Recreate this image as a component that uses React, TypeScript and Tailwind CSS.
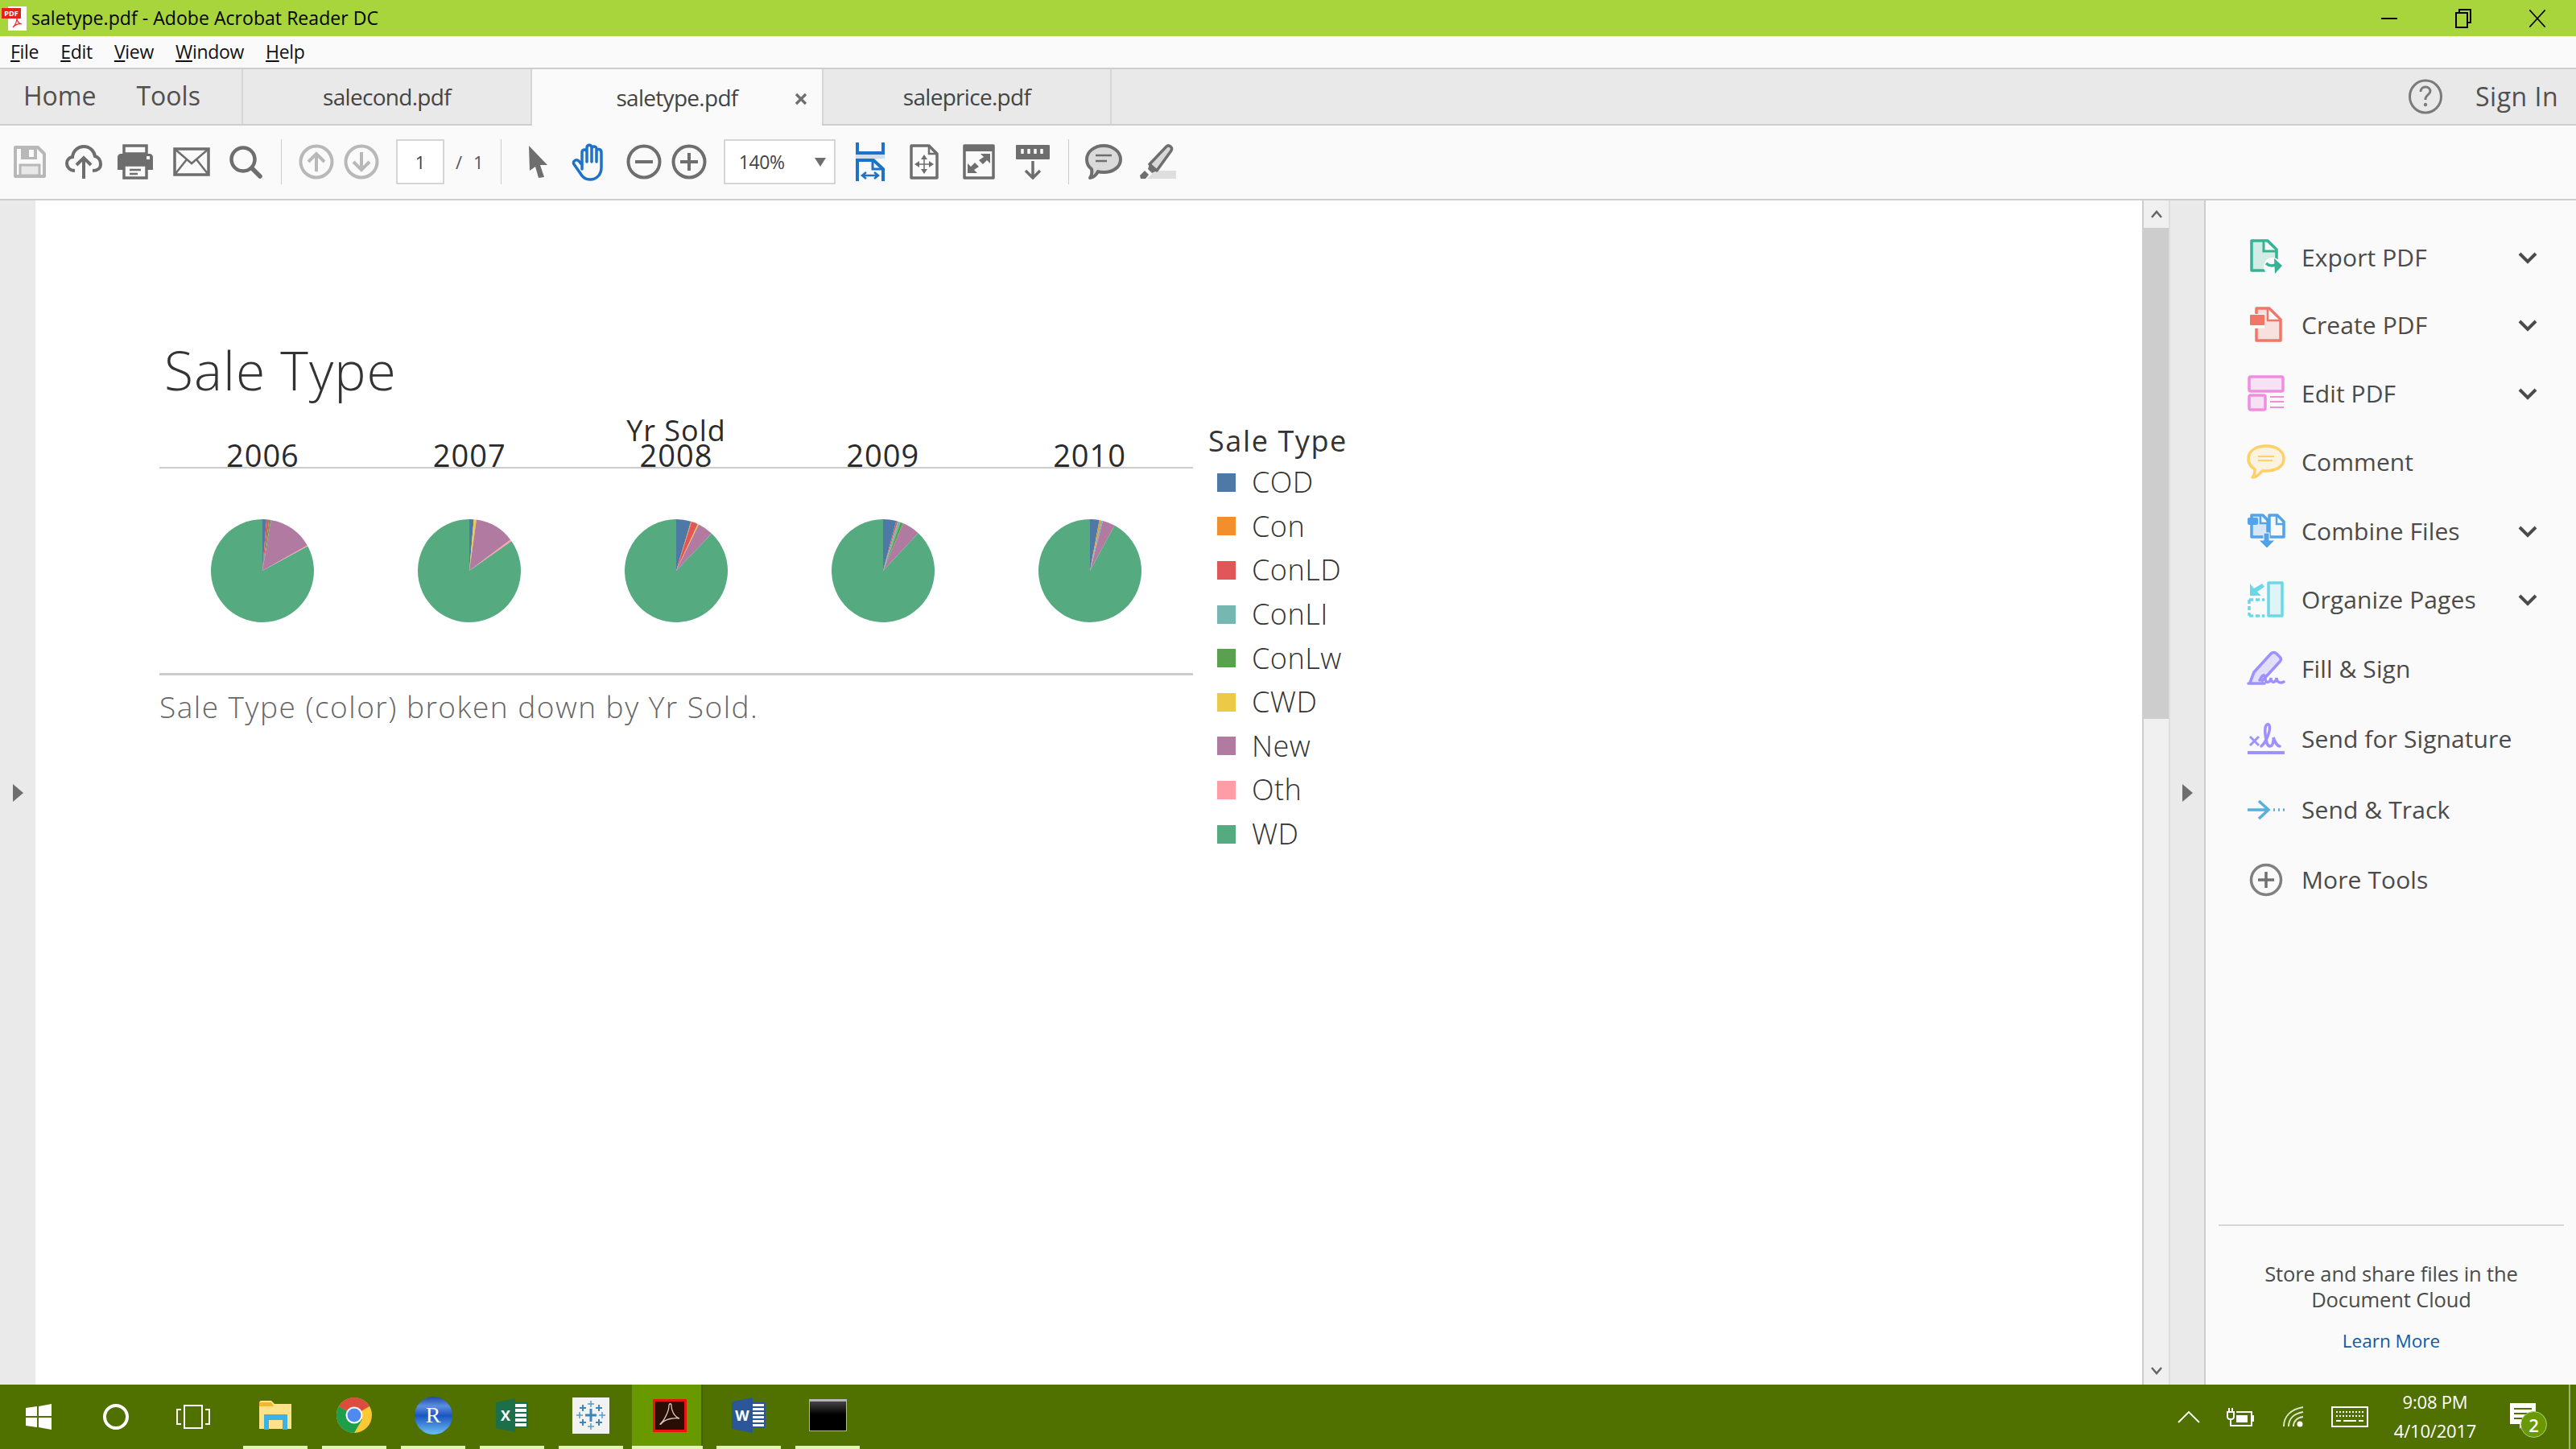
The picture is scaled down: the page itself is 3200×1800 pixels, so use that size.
import React from "react";

const slices: Record<string, string> = {
  COD: "#4e79a7",
  Con: "#f28e2b",
  ConLD: "#e15759",
  ConLI: "#76b7b2",
  ConLw: "#59a14f",
  CWD: "#edc948",
  New: "#b07aa1",
  Oth: "#ff9da7",
  WD: "#56aa80",
};

// each wedge is [sale type, end angle in degrees, clockwise from 12 o'clock]
const years: { year: string; wedges: [string, number][] }[] = [
  { year: "2006", wedges: [["COD", 4.5], ["ConLD", 7.5], ["ConLw", 9.5], ["New", 60.6], ["Oth", 61.6], ["WD", 360]] },
  { year: "2007", wedges: [["COD", 5], ["CWD", 8], ["New", 53], ["Oth", 55], ["WD", 360]] },
  { year: "2008", wedges: [["COD", 16.6], ["Con", 17.5], ["ConLD", 24.8], ["CWD", 26], ["New", 43.6], ["WD", 360]] },
  { year: "2009", wedges: [["COD", 14.8], ["ConLD", 16.5], ["ConLI", 19.6], ["ConLw", 23], ["New", 43], ["WD", 360]] },
  { year: "2010", wedges: [["COD", 10.5], ["Con", 12.4], ["ConLI", 14.5], ["New", 28.6], ["WD", 360]] },
];

function Pie({ wedges }: { wedges: [string, number][] }) {
  const point = (deg: number) => {
    const a = (deg * Math.PI) / 180;
    return `${64 + 64 * Math.sin(a)} ${64 - 64 * Math.cos(a)}`;
  };
  let from = 0;
  return (
    <svg width="128" height="128" viewBox="0 0 128 128">
      {wedges.map(([name, to]) => {
        const d = `M64 64 L${point(from)} A64 64 0 ${to - from > 180 ? 1 : 0} 1 ${point(to)} Z`;
        from = to;
        return <path key={name} d={d} fill={slices[name]} />;
      })}
    </svg>
  );
}

const gray = "#6e6e6e";
const light = "#b8b8b8";
const blue = "#1e73c8";

const SaveIcon = () => (
  <svg width="42" height="42" viewBox="0 0 42 42">
    <path d="M3 3H31L39 11V39H3Z" fill="none" stroke={light} strokeWidth="4" strokeLinejoin="round" />
    <path d="M10 3H30V18H10Z" fill={light} />
    <path d="M20 6H26V15H20Z" fill="#fafafa" />
    <path d="M9 25H33V38H9Z" fill="#e8e8e8" stroke={light} strokeWidth="3" />
  </svg>
);
const UploadIcon = () => (
  <svg width="46" height="44" viewBox="0 0 46 44">
    <path d="M12 33C5 33 2 28 2 24C2 19 6 16 9 16C10 8 16 3 23 3C31 3 36 9 37 15C41 16 44 20 44 25C44 30 40 33 34 33" fill="none" stroke={gray} strokeWidth="4" />
    <path d="M23 43V18M14 26L23 17L32 26" fill="none" stroke={gray} strokeWidth="4" />
  </svg>
);
const PrintIcon = () => (
  <svg width="46" height="44" viewBox="0 0 46 44">
    <path d="M9 2H37V12H9Z" fill="none" stroke={gray} strokeWidth="3.5" />
    <path d="M5 12H41C43 12 45 14 45 16V32H37V26H9V32H1V16C1 14 3 12 5 12Z" fill={gray} />
    <path d="M9 26H37V42H9Z" fill="#fafafa" stroke={gray} strokeWidth="3.5" />
    <path d="M16 32H30M16 37H26" stroke={gray} strokeWidth="2.5" />
    <rect x="37" y="15" width="4" height="4" fill="#fafafa" />
  </svg>
);
const MailIcon = () => (
  <svg width="46" height="36" viewBox="0 0 46 36">
    <path d="M2 2H44V34H2Z" fill="none" stroke={gray} strokeWidth="3.5" />
    <path d="M2 2L23 20L44 2M2 34L17 15M44 34L29 15" fill="none" stroke={gray} strokeWidth="2.5" />
  </svg>
);
const SearchIcon = () => (
  <svg width="42" height="42" viewBox="0 0 42 42">
    <circle cx="18" cy="18" r="14.5" fill="none" stroke={gray} strokeWidth="4.5" />
    <path d="M29 29L39 39" stroke={gray} strokeWidth="5.5" strokeLinecap="round" />
  </svg>
);
const RoundArrow = ({ down }: { down?: boolean }) => (
  <svg width="44" height="44" viewBox="0 0 44 44">
    <circle cx="22" cy="22" r="19.5" fill="none" stroke={light} strokeWidth="4" />
    <path d={down ? "M22 10V32M12 22L22 32L32 22" : "M22 34V12M12 22L22 12L32 22"} fill="none" stroke={light} strokeWidth="4" />
  </svg>
);
const CursorIcon = () => (
  <svg width="28" height="42" viewBox="0 0 28 42">
    <path d="M2 1L25 25L16 25L21 40L14 41L10 27L3 32Z" fill={gray} />
  </svg>
);
const HandIcon = () => (
  <svg width="46" height="48" viewBox="0 0 46 48">
    <path
      d="M13 33V12C13 8 19 8 19 12V7C19 2 25 2 25 7V8C25 4 31 4 31 8V11C31 7 37 8 37 12V31C37 40 31 46 23 46C16 46 13 42 10 37L3 27C1 23 6 20 9 23L13 28M19 12V24M25 8V24M31 11V24"
      fill="none"
      stroke={blue}
      strokeWidth="3.5"
      strokeLinecap="round"
      strokeLinejoin="round"
    />
  </svg>
);
const ZoomCircle = ({ plus }: { plus?: boolean }) => (
  <svg width="44" height="44" viewBox="0 0 44 44">
    <circle cx="22" cy="22" r="19.5" fill="none" stroke={gray} strokeWidth="4" />
    <path d={plus ? "M11 22H33M22 11V33" : "M11 22H33"} stroke={gray} strokeWidth="4" />
  </svg>
);
const FitWidthIcon = () => (
  <svg width="36" height="48" viewBox="0 0 36 48">
    <path d="M2 0V13H34V0" fill="none" stroke={blue} strokeWidth="4" />
    <path d="M0 15H36V20H0Z" fill="#cfdff2" />
    <path d="M2 48V22H22L34 33V48" fill="none" stroke={blue} strokeWidth="4" />
    <path d="M21 22V33H34" fill="none" stroke={blue} strokeWidth="3" />
    <path d="M9 41H27M13 37L8 41L13 45M23 37L28 41L23 45" fill="none" stroke={blue} strokeWidth="2.5" />
  </svg>
);
const FitPageIcon = () => (
  <svg width="36" height="44" viewBox="0 0 36 44">
    <path d="M2 2H24L34 12V42H2Z" fill="none" stroke={gray} strokeWidth="3.5" strokeLinejoin="round" />
    <path d="M24 2V12H34" fill="none" stroke={gray} strokeWidth="2.5" />
    <path d="M18 13L14 19H22ZM18 37L14 31H22ZM6 25L12 21V29ZM30 25L24 21V29Z" fill={gray} />
    <path d="M18 18V32M11 25H25" stroke={gray} strokeWidth="1.5" />
  </svg>
);
const FullScreenIcon = () => (
  <svg width="40" height="44" viewBox="0 0 40 44">
    <path d="M2 2H38V42H2Z" fill="none" stroke={gray} strokeWidth="3.5" strokeLinejoin="round" />
    <path d="M2 2H38V9H2Z" fill={gray} />
    <path d="M22 12H34V24L30 20L25 25L20 20L26 16ZM18 36H6V24L10 28L15 23L20 28L14 32Z" fill={gray} />
  </svg>
);
const ReadIcon = () => (
  <svg width="44" height="44" viewBox="0 0 44 44">
    <path d="M2 2H42V18H2Z" fill={gray} stroke={gray} strokeWidth="2" strokeLinejoin="round" />
    <path d="M9 6V12M17 6V12M25 6V12M33 6V12" stroke="#fafafa" strokeWidth="3.5" />
    <path d="M22 21V42M13 33L22 42L31 33" fill="none" stroke={gray} strokeWidth="3.5" />
  </svg>
);
const CommentIcon = () => (
  <svg width="46" height="46" viewBox="0 0 46 46">
    <path
      d="M23 3C34 3 44 10 44 20C44 30 34 36 23 36C20 36 18 36 16 35C14 39 10 43 6 43C8 40 9 37 8 32C4 29 2 25 2 20C2 10 12 3 23 3Z"
      fill="#dadada"
      stroke={gray}
      strokeWidth="4"
      strokeLinejoin="round"
    />
    <path d="M13 15H33M13 22H27" stroke={gray} strokeWidth="2.5" />
  </svg>
);
const HighlightIcon = () => (
  <svg width="46" height="44" viewBox="0 0 46 44">
    <path d="M10 43H46V33H20Z" fill="#dedede" />
    <path d="M13 25L34 3C37 0 42 4 40 8L22 33Z" fill="#d8d8d8" stroke={gray} strokeWidth="3.5" strokeLinejoin="round" />
    <path d="M13 25L22 33L16 36L11 31Z" fill={gray} />
    <path d="M2 43L1 39L7 33L12 38L8 43Z" fill={gray} />
  </svg>
);

const ExportIcon = () => (
  <svg width="48" height="48" viewBox="0 0 48 48">
    <path d="M6 3H26L37 14V40H6Z" fill="#d3ece5" stroke="#36b294" strokeWidth="3.5" strokeLinejoin="round" />
    <path d="M21 3V16H37" fill="#fafafa" stroke="#36b294" strokeWidth="3" />
    <circle cx="32" cy="35" r="11" fill="#fafafa" />
    <path d="M24 31C28 35 32 34 36 33" fill="none" stroke="#36b294" strokeWidth="3.5" />
    <path d="M34 25L44 34L35 44Z" fill="#36b294" />
  </svg>
);
const CreateIcon = () => (
  <svg width="48" height="48" viewBox="0 0 48 48">
    <path d="M12 3H28L42 17V43H12Z" fill="#f8e0de" stroke="#f07668" strokeWidth="3.5" strokeLinejoin="round" />
    <path d="M26 4V18H41" fill="#fafafa" stroke="#f07668" strokeWidth="2.5" />
    <path d="M3 10H22V28H3Z" fill="#fafafa" />
    <rect x="4" y="11" width="18" height="13" rx="1" fill="#f07668" />
  </svg>
);
const EditIcon = () => (
  <svg width="48" height="48" viewBox="0 0 48 48">
    <rect x="3" y="3" width="42" height="18" rx="2" fill="#f7e2f5" stroke="#ef8ddf" strokeWidth="3.5" />
    <rect x="3" y="26" width="20" height="18" rx="2" fill="#f7e2f5" stroke="#ef8ddf" strokeWidth="3.5" />
    <path d="M29 28H46M29 34H46M29 41H46" stroke="#ef8ddf" strokeWidth="2" />
  </svg>
);
const CommentToolIcon = () => (
  <svg width="48" height="48" viewBox="0 0 48 48">
    <path
      d="M24 4C35 4 46 9 46 20C46 31 34 35 24 35C22 35 20 35 19 35C16 39 12 43 7 43C9 41 10 38 10 33C5 30 2 26 2 20C2 9 13 4 24 4Z"
      fill="#fbf2df"
      stroke="#fdd068"
      strokeWidth="3.5"
      strokeLinejoin="round"
    />
    <path d="M14 17H34M14 22H32" stroke="#fdd068" strokeWidth="2" />
  </svg>
);
const CombineIcon = () => (
  <svg width="48" height="48" viewBox="0 0 48 48">
    <path d="M6 4H20L26 10V31H6Z" fill="#d5e7f7" stroke="#52a3ec" strokeWidth="3.5" strokeLinejoin="round" />
    <path d="M17 4V14H26" fill="#fafafa" stroke="#52a3ec" strokeWidth="2.5" />
    <rect x="1" y="7" width="13" height="9" rx="2" fill="#52a3ec" />
    <path d="M28 4H38L46 12V31H28Z" fill="#fafafa" stroke="#52a3ec" strokeWidth="3.5" strokeLinejoin="round" />
    <path d="M37 4V15H46" fill="none" stroke="#52a3ec" strokeWidth="2.5" />
    <path d="M21 26H28V35H35L25 45L15 35H21Z" fill="#52a3ec" stroke="#fafafa" strokeWidth="1" />
  </svg>
);
const OrganizeIcon = () => (
  <svg width="48" height="48" viewBox="0 0 48 48">
    <path d="M27 3H44V44H27Z" fill="#def4f7" stroke="#6dd7e8" strokeWidth="3.5" strokeLinejoin="round" />
    <path d="M4 4V19H18L13 14L22 8L19 4L9 10L4 4Z" fill="#6dd7e8" />
    <path d="M3 24H22M3 44H22M3 24V44" fill="none" stroke="#6dd7e8" strokeWidth="3.5" strokeDasharray="5 3" />
  </svg>
);
const FillSignIcon = () => (
  <svg width="48" height="48" viewBox="0 0 48 48">
    <path d="M4 41L9 28L30 5C32 3 35 3 37 5L41 9C43 11 43 13 41 15L18 40" fill="#e2dffb" stroke="#9c91ff" strokeWidth="3.5" strokeLinejoin="round" />
    <path d="M2 42H22M16 38C20 30 23 30 23 36C23 42 29 42 30 35C30 42 36 42 37 35C37 41 42 42 46 40" fill="none" stroke="#9c91ff" strokeWidth="3.5" strokeLinecap="round" />
  </svg>
);
const SendSigIcon = () => (
  <svg width="48" height="48" viewBox="0 0 48 48">
    <path d="M4 21L15 32M15 21L4 32" stroke="#9c91ff" strokeWidth="3" />
    <path d="M18 33C24 28 30 14 28 7C25 3 22 8 23 18C24 27 25 33 29 33C32 33 34 26 33 22C35 27 37 33 41 33" fill="none" stroke="#9c91ff" strokeWidth="3.5" strokeLinecap="round" />
    <path d="M1 41H47" stroke="#9c91ff" strokeWidth="4" />
  </svg>
);
const TrackIcon = () => (
  <svg width="48" height="48" viewBox="0 0 48 48">
    <path d="M1 24H27M15 13L27 24L15 35" fill="none" stroke="#58aedc" strokeWidth="3.5" />
    <path d="M33 24H35M39 24H41M45 24H47" stroke="#58aedc" strokeWidth="3.5" />
  </svg>
);
const MoreIcon = () => (
  <svg width="48" height="48" viewBox="0 0 48 48">
    <circle cx="24" cy="24" r="18.5" fill="none" stroke="#808080" strokeWidth="3.5" />
    <path d="M14 24H34M24 14V34" stroke="#707070" strokeWidth="3.5" />
  </svg>
);

const tools = [
  { label: "Export PDF", icon: <ExportIcon />, more: true, h: "h-[84px]" },
  { label: "Create PDF", icon: <CreateIcon />, more: true, h: "h-[84px]" },
  { label: "Edit PDF", icon: <EditIcon />, more: true, h: "h-[85px]" },
  { label: "Comment", icon: <CommentToolIcon />, more: false, h: "h-[86px]" },
  { label: "Combine Files", icon: <CombineIcon />, more: true, h: "h-[85px]" },
  { label: "Organize Pages", icon: <OrganizeIcon />, more: true, h: "h-[85px]" },
  { label: "Fill & Sign", icon: <FillSignIcon />, more: false, h: "h-[87px]" },
  { label: "Send for Signature", icon: <SendSigIcon />, more: false, h: "h-[88px]" },
  { label: "Send & Track", icon: <TrackIcon />, more: false, h: "h-[88px]" },
  { label: "More Tools", icon: <MoreIcon />, more: false, h: "h-[86px]" },
];

const taskIcons = [
  {
    key: "explorer",
    icon: (
      <svg width="42" height="36" viewBox="0 0 42 36">
        <path d="M1 3C1 1 2 0 4 0H16L20 4H41V35H1Z" fill="#ffe28a" />
        <path d="M1 2H16L19 7H1Z" fill="#f2b72f" />
        <path d="M7 17H36V36H30V24H13V36H7Z" fill="#39b3e6" />
      </svg>
    ),
  },
  {
    key: "chrome",
    icon: (
      <svg width="44" height="44" viewBox="0 0 44 44">
        <circle cx="22" cy="22" r="22" fill="#fcc934" />
        <path d="M22 22L3 11A22 22 0 0 1 41 11Z" fill="#dc4c3f" />
        <path d="M3 11A22 22 0 0 0 22 44L32 27L22 22Z" fill="#1e9e4a" />
        <circle cx="22" cy="22" r="10.5" fill="#fff" />
        <circle cx="22" cy="22" r="8.5" fill="#4f8af0" />
      </svg>
    ),
  },
  {
    key: "r",
    icon: (
      <div className="relative flex h-[47px] w-[47px] items-center justify-center rounded-full bg-[linear-gradient(180deg,#2147a8_0%,#5a8fe0_25%,#1b55c0_50%,#6cc0f5_100%)]">
        <span className="font-['Liberation_Serif',serif] text-[28px] leading-none text-white">R</span>
      </div>
    ),
  },
  {
    key: "excel",
    icon: (
      <div className="relative flex h-[42px] w-[40px] items-center">
        <div className="absolute right-0 top-[5px] h-[32px] w-[26px] border-2 border-[#1d6f4a] bg-[repeating-linear-gradient(180deg,#ffffff_0,#ffffff_4px,#1d6f4a_4px,#1d6f4a_6px)]" />
        <div className="relative flex h-[42px] w-[24px] items-center justify-center bg-[#1d6f4a] [clip-path:polygon(0_12%,100%_0,100%_100%,0_88%)]">
          <span className="font-['Open_Sans',sans-serif] text-[18px] font-bold leading-none text-white">X</span>
        </div>
      </div>
    ),
  },
  {
    key: "tableau",
    icon: (
      <div className="flex h-[45px] w-[46px] items-center justify-center bg-[#f2f2f2]">
        <svg width="40" height="40" viewBox="0 0 40 40">
          <path d="M20 2V10M16 6H24M20 30V38M16 34H24M2 20H10M6 16V24M30 20H38M34 16V24" stroke="#5a9bc4" strokeWidth="1.5" />
          <path d="M20 12V28M13 20H27" stroke="#3d85b8" strokeWidth="3" />
          <path d="M10 7V15M6 11H14M30 7V15M26 11H34M10 25V33M6 29H14M30 25V33M26 29H34" stroke="#3d85b8" strokeWidth="2" />
        </svg>
      </div>
    ),
  },
  {
    key: "acrobat",
    icon: (
      <div className="relative flex h-[41px] w-[42px] items-center justify-center border-[3px] border-[#ee1111] bg-[#2a0d05]">
        <svg width="30" height="32" viewBox="0 0 30 32">
          <path d="M3 27C8 23 14 11 14 4C14 1 17 1 17 4C17 11 21 18 27 20C23 19 11 20 6 25C4 27 3 28 3 27Z" fill="none" stroke="#d9c8c0" strokeWidth="1.3" />
        </svg>
      </div>
    ),
  },
  {
    key: "word",
    icon: (
      <div className="relative flex h-[44px] w-[42px] items-center">
        <div className="absolute right-0 top-[6px] h-[32px] w-[26px] border-2 border-[#2b579a] bg-[repeating-linear-gradient(180deg,#ffffff_0,#ffffff_3px,#2b579a_3px,#2b579a_5px)]" />
        <div className="relative flex h-[44px] w-[26px] items-center justify-center bg-[#2b579a] [clip-path:polygon(0_12%,100%_0,100%_100%,0_88%)]">
          <span className="font-['Open_Sans',sans-serif] text-[18px] font-bold leading-none text-white">W</span>
        </div>
      </div>
    ),
  },
  {
    key: "cmd",
    icon: <div className="h-[40px] w-[47px] border-t-[3px] border-b border-x border-[#b5b5b5] bg-[linear-gradient(180deg,#444_0%,#000_45%)]" />,
  },
];

export default function App() {
  return (
    <div className="flex h-[1800px] w-[3200px] flex-col overflow-hidden bg-white font-['Open_Sans',sans-serif]">
      {/* title bar */}
      <div className="flex h-[45px] items-center bg-[#a8d43c]">
        <div className="relative ml-[2px] h-[30px] w-[32px] shrink-0">
          <div className="absolute left-[8px] top-0 h-[30px] w-[23px] bg-white" />
          <svg className="absolute left-[12px] top-[13px]" width="14" height="14" viewBox="0 0 14 14">
            <path d="M2 13C5 10 7 5 7 1C7 5 9 8 13 9C9 8 5 10 2 13Z" fill="none" stroke="#e8302a" strokeWidth="1.2" />
          </svg>
          <div className="absolute left-0 top-[2px] flex h-[13px] w-[24px] items-center justify-center bg-[#e8201a] text-[9px] font-bold leading-none text-white">PDF</div>
        </div>
        <span className="ml-[5px] text-[23px] leading-none tracking-[0.05px] text-black">saletype.pdf - Adobe Acrobat Reader DC</span>
        <div className="ml-auto flex h-full items-center">
          <div className="flex w-[92px] justify-center">
            <div className="h-[2px] w-[20px] bg-black" />
          </div>
          <div className="flex w-[92px] justify-center">
            <svg width="20" height="24" viewBox="0 0 20 24">
              <path d="M5 4V1H19V17H15M1 5H15V23H1Z" fill="none" stroke="#000" strokeWidth="2" />
            </svg>
          </div>
          <div className="flex w-[94px] justify-center pr-[3px]">
            <svg width="20" height="22" viewBox="0 0 20 22">
              <path d="M0 0L20 22M20 0L0 22" stroke="#000" strokeWidth="1.6" />
            </svg>
          </div>
        </div>
      </div>

      {/* menu bar */}
      <div className="flex h-[39px] items-center gap-[27px] bg-[#fafafa] pl-[13px] text-[23px] leading-none tracking-[-0.3px] text-[#111]">
        <span><span className="underline underline-offset-2">F</span>ile</span>
        <span><span className="underline underline-offset-2">E</span>dit</span>
        <span><span className="underline underline-offset-2">V</span>iew</span>
        <span><span className="underline underline-offset-2">W</span>indow</span>
        <span><span className="underline underline-offset-2">H</span>elp</span>
      </div>

      {/* tab bar */}
      <div className="flex h-[72px] border-y-2 border-[#cdcdcd] bg-[#e9e9e9]">
        <div className="flex w-[300px] items-center gap-[50px] pb-[3px] pl-[29px] text-[32px] font-medium leading-none text-[#505050]">
          <span>Home</span>
          <span>Tools</span>
        </div>
        <div className="flex w-[361px] items-center justify-center border-x-2 border-[#d5d5d5] text-[28px] leading-none tracking-[-0.7px] text-[#444]">salecond.pdf</div>
        <div className="relative z-10 -mb-[2px] flex h-[70px] w-[360px] items-center justify-center bg-[#fafafa] text-[28px] leading-none tracking-[-0.7px] text-[#444]">
          saletype.pdf
          <svg className="absolute right-[18px] top-[29px]" width="16" height="16" viewBox="0 0 16 16">
            <path d="M2 2L14 14M14 2L2 14" stroke="#6e6e6e" strokeWidth="3.2" />
          </svg>
        </div>
        <div className="flex w-[360px] items-center justify-center border-x-2 border-[#d5d5d5] text-[28px] leading-none tracking-[-0.7px] text-[#444]">saleprice.pdf</div>
        <div className="ml-auto flex items-center pr-[22px]">
          <svg width="42" height="44" viewBox="0 0 42 44">
            <ellipse cx="21" cy="22" rx="19.5" ry="20" fill="none" stroke="#7b7b7b" strokeWidth="3" />
            <path d="M15 16C15 12 18 10 21 10C25 10 27 13 27 15C27 19 22 20 21 24V26" fill="none" stroke="#7b7b7b" strokeWidth="3" />
            <circle cx="21" cy="32" r="2.2" fill="#7b7b7b" />
          </svg>
          <span className="ml-[41px] text-[32px] font-medium leading-none tracking-[0.5px] text-[#505050]">Sign In</span>
        </div>
      </div>

      {/* tool bar */}
      <div className="flex h-[93px] items-center border-b-2 border-[#cdcdcd] bg-[#fafafa] pb-[1px] pl-[7px]">
        <div className="flex w-[60px] shrink-0 justify-center"><SaveIcon /></div>
        <div className="flex w-[74px] shrink-0 justify-center"><UploadIcon /></div>
        <div className="flex w-[54px] shrink-0 justify-center"><PrintIcon /></div>
        <div className="flex w-[86px] shrink-0 justify-center"><MailIcon /></div>
        <div className="flex w-[48px] shrink-0 justify-center"><SearchIcon /></div>
        <div className="ml-[20px] h-[56px] w-px bg-[#cdcdcd]" />
        <div className="ml-[21px] flex w-[44px] shrink-0 justify-center"><RoundArrow /></div>
        <div className="ml-[12px] flex w-[44px] shrink-0 justify-center"><RoundArrow down /></div>
        <div className="ml-[21px] flex h-[56px] w-[60px] items-center justify-center border-2 border-[#d5d5d5] bg-white text-[22px] leading-none text-[#444]">1</div>
        <span className="ml-[14px] text-[22px] leading-none text-[#555]">/</span>
        <span className="ml-[14px] text-[22px] leading-none text-[#555]">1</span>
        <div className="ml-[21px] h-[56px] w-px bg-[#cdcdcd]" />
        <div className="ml-[32px] flex w-[28px] shrink-0 justify-center"><CursorIcon /></div>
        <div className="ml-[27px] flex w-[46px] shrink-0 justify-center"><HandIcon /></div>
        <div className="ml-[22px] flex w-[44px] shrink-0 justify-center"><ZoomCircle /></div>
        <div className="ml-[12px] flex w-[44px] shrink-0 justify-center"><ZoomCircle plus /></div>
        <div className="ml-[21px] flex h-[56px] w-[139px] items-center border-2 border-[#d5d5d5] bg-white pl-[17px] text-[23px] leading-none tracking-[-0.4px] text-[#444]">
          140%
          <svg className="ml-[37px]" width="14" height="11" viewBox="0 0 14 11">
            <path d="M0 0H14L7 11Z" fill="#6e6e6e" />
          </svg>
        </div>
        <div className="ml-[25px] flex w-[36px] shrink-0 justify-center"><FitWidthIcon /></div>
        <div className="ml-[31px] flex w-[36px] shrink-0 justify-center"><FitPageIcon /></div>
        <div className="ml-[30px] flex w-[40px] shrink-0 justify-center"><FullScreenIcon /></div>
        <div className="ml-[25px] flex w-[44px] shrink-0 justify-center"><ReadIcon /></div>
        <div className="ml-[22px] h-[56px] w-px bg-[#cdcdcd]" />
        <div className="ml-[20px] flex w-[46px] shrink-0 justify-center"><CommentIcon /></div>
        <div className="ml-[21px] flex w-[46px] shrink-0 justify-center"><HighlightIcon /></div>
      </div>

      {/* work area */}
      <div className="flex min-h-0 flex-1">
        <div className="flex w-[44px] items-center justify-center bg-[#eaeaea]">
          <svg width="13" height="22" viewBox="0 0 13 22">
            <path d="M0 0L13 11L0 22Z" fill="#6e6e6e" />
          </svg>
        </div>

        {/* document page */}
        <div className="flex flex-1 items-start bg-white pl-[154px] pt-[170px]">
          <div className="flex w-[1284px] flex-col">
            <div className="pl-[6px] text-[66px] font-light leading-[80px] tracking-[1px] text-[#333]">Sale Type</div>
            <div className="mt-[24px] grid h-[59px] grid-cols-5 border-b-2 border-[#cccccc] text-center text-[38px] leading-[31px] tracking-[1px] text-[#2b2b2b]">
              {years.map((y) => (
                <div key={y.year} className="flex flex-col justify-end overflow-visible">
                  {y.year === "2008" && <span className="-mt-[4px] text-[36px] leading-[31px]">Yr Sold</span>}
                  <span>{y.year}</span>
                </div>
              ))}
            </div>
            <div className="grid h-[257px] grid-cols-5 border-b-[3px] border-[#cccccc]">
              {years.map((y) => (
                <div key={y.year} className="flex items-center justify-center">
                  <Pie wedges={y.wedges} />
                </div>
              ))}
            </div>
            <div className="mt-[14px] text-[37px] font-light leading-[50px] tracking-[1.5px] text-[#666]">Sale Type (color) broken down by Yr Sold.</div>
          </div>

          <div className="ml-[19px] mt-[106px] flex flex-col">
            <div className="h-[47px] text-[36px] leading-[46px] tracking-[1.6px] text-[#333]">Sale Type</div>
            {Object.keys(slices).map((name) => (
              <LegendRow key={name} name={name} />
            ))}
          </div>
        </div>

        {/* scroll bar */}
        <div className="flex w-[35px] flex-col border-x-2 border-x-[#cdcdcd] border-r-[#dedede] bg-[#f0f0f0]">
          <div className="flex h-[34px] items-center justify-center">
            <svg width="14" height="10" viewBox="0 0 14 10">
              <path d="M1 9L7 2L13 9" fill="none" stroke="#666" strokeWidth="2.5" />
            </svg>
          </div>
          <div className="h-[610px] bg-[#cdcdcd]" />
          <div className="mt-auto flex h-[34px] items-center justify-center">
            <svg width="14" height="10" viewBox="0 0 14 10">
              <path d="M1 1L7 8L13 1" fill="none" stroke="#666" strokeWidth="2.5" />
            </svg>
          </div>
        </div>

        <div className="flex w-[44px] items-center justify-center border-r-2 border-[#cdcdcd] bg-[#eaeaea]">
          <svg width="13" height="22" viewBox="0 0 13 22">
            <path d="M0 0L13 11L0 22Z" fill="#6e6e6e" />
          </svg>
        </div>

        {/* tools panel */}
        <div className="flex w-[460px] flex-col bg-[#fafafa] pt-[29px]">
          {tools.map((t) => (
            <div key={t.label} className={`flex items-center pl-[51px] ${t.h}`}>
              <div className="flex h-[48px] w-[48px] items-center justify-center">{t.icon}</div>
              <span className="ml-[20px] text-[30px] leading-none tracking-[0.1px] text-[#4b4b4b]">{t.label}</span>
              {t.more && (
                <svg className="ml-auto mr-[48px]" width="24" height="16" viewBox="0 0 24 16">
                  <path d="M2 3L12 13L22 3" fill="none" stroke="#4b4b4b" strokeWidth="4" />
                </svg>
              )}
            </div>
          ))}
          <div className="mt-auto mb-[38px] ml-[16px] mr-[15px] flex flex-col items-center border-t-2 border-[#d5d5d5] pt-[43px] text-center">
            <div className="text-[25.5px] leading-[32px] tracking-[-0.1px] text-[#4b4b4b]">
              Store and share files in the
              <br />
              Document Cloud
            </div>
            <div className="mt-[20px] text-[22.5px] leading-[32px] text-[#0a5ba8]">Learn More</div>
          </div>
        </div>
      </div>

      {/* task bar */}
      <div className="flex h-[80px] items-center bg-[#507000]">
        <div className="flex w-[96px] justify-center">
          <svg width="32" height="32" viewBox="0 0 32 32">
            <path d="M0 5L14 3V15H0ZM16 3L32 0V15H16ZM0 17H14V29L0 27ZM16 17H32V32L16 29Z" fill="#fff" />
          </svg>
        </div>
        <div className="flex w-[96px] justify-center">
          <div className="h-[32px] w-[32px] rounded-full border-[4px] border-white" />
        </div>
        <div className="flex w-[96px] justify-center">
          <svg width="42" height="30" viewBox="0 0 42 30">
            <path d="M10 1H32V29H10ZM6 6H1V24H6M36 6H41V24H36" fill="none" stroke="#fff" strokeWidth="2" />
          </svg>
        </div>
        <div className="ml-[5px] flex h-full">
          {taskIcons.map((t) => (
            <div key={t.key} className="relative flex h-full w-[98px] items-center justify-center">
              {t.key === "acrobat" && <div className="absolute inset-y-0 left-[2px] w-[88px] border-r-2 border-[#456000] bg-[#689900]" />}
              <div className="relative pb-[4px]">{t.icon}</div>
              <div className={`absolute bottom-0 h-[4px] bg-[#e1f6b0] ${t.key === "acrobat" ? "left-[2px] right-[8px]" : "left-[9px] right-[9px]"}`} />
            </div>
          ))}
        </div>

        <div className="ml-auto flex h-full items-center text-white">
          <div className="flex w-[64px] justify-center">
            <svg width="28" height="16" viewBox="0 0 28 16">
              <path d="M1 15L14 2L27 15" fill="none" stroke="#fff" strokeWidth="1.8" />
            </svg>
          </div>
          <div className="flex w-[64px] justify-center">
            <svg width="34" height="24" viewBox="0 0 34 24">
              <path d="M1 6H9V12C9 14 7 15 5 15C3 15 1 14 1 12ZM3 6V1M7 6V1M5 15V23H31V6H12" fill="none" stroke="#fff" strokeWidth="2" />
              <path d="M12 10H26V19H12Z" fill="#fff" />
              <path d="M33 10V18" stroke="#fff" strokeWidth="2" />
            </svg>
          </div>
          <div className="flex w-[68px] justify-center">
            <svg width="28" height="28" viewBox="0 0 28 28">
              <path d="M2 26C2 14 10 5 26 2M8 26C8 17 14 10 26 8M14 26C14 20 18 15 26 14" fill="none" stroke="#dfe8c8" strokeWidth="2" />
              <circle cx="22" cy="23" r="3.5" fill="#fff" />
            </svg>
          </div>
          <div className="flex w-[72px] justify-center">
            <svg width="46" height="26" viewBox="0 0 46 26">
              <rect x="1" y="1" width="44" height="24" fill="none" stroke="#fff" strokeWidth="2" />
              <path d="M6 7H40M6 12H40" stroke="#fff" strokeWidth="2" strokeDasharray="2 2" />
              <path d="M6 18H12M15 18H31M34 18H40" stroke="#fff" strokeWidth="2" />
            </svg>
          </div>
          <div className="flex w-[140px] flex-col items-center gap-[11px] pb-[1px] text-[22px] leading-[25px] tracking-[-0.2px]">
            <span>9:08 PM</span>
            <span>4/10/2017</span>
          </div>
          <div className="relative flex w-[78px] justify-center">
            <svg width="32" height="34" viewBox="0 0 32 34">
              <path d="M0 0H32V26H18L12 32V26H0Z" fill="#fff" />
              <path d="M5 7H27M5 13H27M5 19H19" stroke="#507000" strokeWidth="2" />
            </svg>
            <div className="absolute left-[36px] top-[10px] flex h-[33px] w-[33px] items-center justify-center rounded-full border border-[#b0d080] bg-[#689900] text-[22px] font-semibold leading-none">2</div>
          </div>
          <div className="ml-[18px] h-full w-[2px] bg-[#9fb46a]" />
          <div className="w-[7px]" />
        </div>
      </div>
    </div>
  );
}

function LegendRow({ name }: { name: string }) {
  return (
    <div className="flex h-[54.6px] items-center pl-[11px]">
      <div className="h-[23px] w-[23px]" style={{ backgroundColor: slices[name] }} />
      <span className="ml-[20px] text-[36px] font-light leading-none tracking-[0.5px] text-[#333]">{name}</span>
    </div>
  );
}
